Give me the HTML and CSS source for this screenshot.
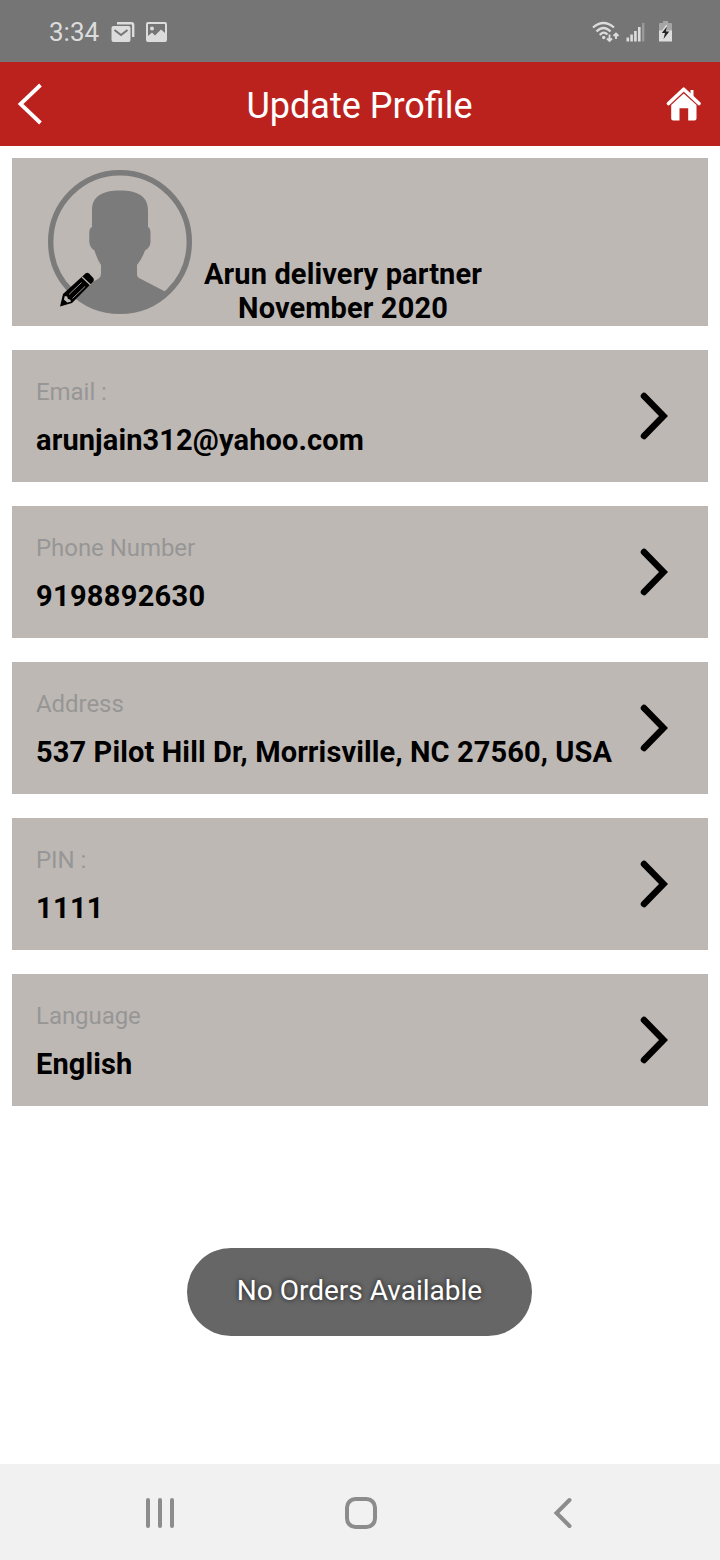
FILE: index.html
```html
<!DOCTYPE html>
<html lang="en">
<head>
<meta charset="UTF-8">
<meta name="viewport" content="width=device-width, initial-scale=1.0">
<title>Update Profile</title>
<link rel="stylesheet" href="styles.css">
</head>
<body>

<div class="status-bar">
  <span class="time">3:34</span>
  <svg class="icon-mail" width="24" height="22" viewBox="0 0 24 22">
    <path d="M6 2.200H20.500Q22.200 2.200 22.200 4V16" fill="none" stroke="#dcdcdc" stroke-width="2.400"/>
    <rect x="0.500" y="5" width="19" height="16" rx="2" fill="#dcdcdc"/>
    <path d="M3.500 9L10 14L16.500 9" fill="none" stroke="#757575" stroke-width="2"/>
  </svg>
  <svg class="icon-image" width="21" height="20" viewBox="0 0 21 20">
    <rect x="1" y="1" width="19" height="18" rx="1" fill="none" stroke="#dcdcdc" stroke-width="2"/>
    <circle cx="6" cy="6.500" r="2" fill="#dcdcdc"/>
    <path d="M2 14L6 10.500L9 13.500L15 7.500L19 11V19H2Z" fill="#dcdcdc"/>
  </svg>
  <div class="status-right">
    <svg class="icon-wifi" width="28" height="22" viewBox="0 0 28 22">
      <g fill="none" stroke="#dcdcdc" stroke-width="2.300">
        <path d="M1 6.500Q11.500 -2.500 22 6.500"/>
        <path d="M4.500 10.500Q11.500 3.500 18.500 10.500"/>
        <path d="M7.800 14Q11.500 9.500 15.500 13.500"/>
        <path d="M17.500 13.500V20M15 17.500L17.500 20L20 17.500M24 18V12.500M21.500 15L24 12.500L26.500 15" stroke-width="1.900"/>
      </g>
      <circle cx="11.700" cy="16.500" r="1.700" fill="#dcdcdc"/>
    </svg>
    <svg class="icon-signal" width="19" height="20" viewBox="0 0 19 20">
      <path d="M1.800 15.500V19.500M5.600 12.500V19.500M9.400 9V19.500M13.300 5V19.500" stroke="#dcdcdc" stroke-width="2.600"/>
      <path d="M17.200 1V19.500" stroke="#9a9a9a" stroke-width="2.400"/>
    </svg>
    <svg class="icon-battery" width="13" height="21" viewBox="0 0 13 21">
      <path d="M4 0H9V2H12Q13 2 13 3V10H0V3Q0 2 1 2H4Z" fill="#a6a6a6"/>
      <path d="M0 9.500H3L7 4H8V9.500H13V20.500H0Z" fill="#dcdcdc"/>
      <path d="M8 5.500L2.800 12H6L4.500 18L10.300 10.500H7Z" fill="#222"/>
    </svg>
  </div>
</div>

<header>
  <svg class="back" width="28" height="44" viewBox="0 0 28 44">
    <path d="M25.500 3L5.500 22L25.500 41" fill="none" stroke="#fff" stroke-width="3.800"/>
  </svg>
  <h1>Update Profile</h1>
  <svg class="home" width="36" height="36" viewBox="0 0 36 36">
    <path d="M2.500 17.500L17.700 3.200L33 17.500" fill="none" stroke="#fff" stroke-width="3.600" stroke-linejoin="round" stroke-linecap="round"/>
    <path d="M24.500 4H27.500V13L24.500 10Z" fill="#fff"/>
    <path d="M5.200 19L17.700 7.500L30.500 19V32.500Q30.500 34.500 28.500 34.500H22.200V22.200H13.500V34.500H7.200Q5.200 34.500 5.200 32.500Z" fill="#fff"/>
  </svg>
</header>

<div class="container">
  <div class="profile">
    <div class="avatar">
      <svg width="144" height="144" viewBox="0 0 144 144">
        <circle cx="72" cy="72" r="69.300" fill="none" stroke="#7b7b7b" stroke-width="5.400"/>
        <path d="M44 40C44 26 55 20.500 72 20.500C89 20.500 100 26 100 40V57Q102.500 58 102.500 63V72Q102 78 97 80.500Q94 89 89 95V104Q89 107 92 108.500L118 122A69 69 0 0 1 26 122L50 109Q53 107 53 104V95Q49 89 46.500 80.500Q42 78 41.300 72V63Q41.300 58 44 57Z" fill="#7b7b7b"/>
      </svg>
      <svg class="pencil" width="35" height="35" viewBox="0 0 35 35">
        <path d="M0 34.500L3 22L25.500 1.500Q27.300 0 29 1.500L33.300 6Q34.500 8 33.300 9.500L12 31Z" fill="#000"/>
        <path d="M22 5L30.500 13" fill="none" stroke="#beb8b4" stroke-width="1.200"/>
        <path d="M9 22.500L21.500 10.500M12.500 26.500L25 14.500" fill="none" stroke="#beb8b4" stroke-width="0.800"/>
        <path d="M4.800 24L7.200 24.500L8 27L10.500 27.800L10.800 29.800L7.200 30.600L3.900 27.600Z" fill="#beb8b4"/>
      </svg>
    </div>
    <div class="profile-name">Arun delivery partner<br>November 2020</div>
  </div>

  <div class="card">
    <div class="card-text">
      <div class="label">Email :</div>
      <div class="value">arunjain312@yahoo.com</div>
    </div>
    <svg class="chevron" width="28" height="48" viewBox="0 0 28 48"><path d="M4 4L23.500 24L4 44"/></svg>
  </div>

  <div class="card">
    <div class="card-text">
      <div class="label">Phone Number</div>
      <div class="value digits">9198892630</div>
    </div>
    <svg class="chevron" width="28" height="48" viewBox="0 0 28 48"><path d="M4 4L23.500 24L4 44"/></svg>
  </div>

  <div class="card">
    <div class="card-text">
      <div class="label">Address</div>
      <div class="value">537 Pilot Hill Dr, Morrisville, NC 27560, USA</div>
    </div>
    <svg class="chevron" width="28" height="48" viewBox="0 0 28 48"><path d="M4 4L23.500 24L4 44"/></svg>
  </div>

  <div class="card">
    <div class="card-text">
      <div class="label">PIN :</div>
      <div class="value digits">1111</div>
    </div>
    <svg class="chevron" width="28" height="48" viewBox="0 0 28 48"><path d="M4 4L23.500 24L4 44"/></svg>
  </div>

  <div class="card">
    <div class="card-text">
      <div class="label">Language</div>
      <div class="value">English</div>
    </div>
    <svg class="chevron" width="28" height="48" viewBox="0 0 28 48"><path d="M4 4L23.500 24L4 44"/></svg>
  </div>
</div>

<div class="toast">No Orders Available</div>

<nav class="nav-bar">
  <svg width="30" height="32" viewBox="0 0 30 32">
    <path d="M3 3V29M15 3V29M27 3V29"/>
  </svg>
  <svg class="nav-home" width="32" height="32" viewBox="0 0 32 32">
    <rect x="2" y="2" width="28" height="28" rx="8.500"/>
  </svg>
  <svg width="20" height="32" viewBox="0 0 20 32">
    <path d="M16.500 3L3.500 16L16.500 29"/>
  </svg>
</nav>

</body>
</html>
```
FILE: styles.css
```css
* {
  box-sizing: border-box;
}

body {
  margin: 0;
  height: 1560px;
  display: flex;
  flex-direction: column;
  font-family: Roboto, sans-serif;
  background: #fff;
  color: #000;
}

svg {
  display: block;
  flex-shrink: 0;
}

.status-bar {
  height: 62px;
  padding: 1px 48px 0 49px;
  display: flex;
  align-items: center;
  background: #757575;
}

.time {
  width: 62px;
  font-size: 26px;
  color: #dcdcdc;
}

.icon-image {
  margin-left: 11px;
}

.status-right {
  margin-left: auto;
  display: flex;
  align-items: center;
}

.icon-signal {
  margin-left: 6px;
}

.icon-battery {
  margin-left: 14px;
}

header {
  height: 84px;
  padding: 0 18px 0 15px;
  display: flex;
  align-items: center;
  justify-content: space-between;
  background: #bb221e;
  color: #fff;
}

header h1 {
  margin: 4px 0 0 10px;
  font-size: 36px;
  font-weight: 400;
}

.container {
  padding: 12px;
  display: flex;
  flex-direction: column;
  gap: 24px;
}

.profile {
  height: 168px;
  padding: 0 36px;
  display: flex;
  align-items: center;
  gap: 12px;
  background: #beb8b4;
}

.avatar {
  position: relative;
}

.pencil {
  position: absolute;
  left: 12px;
  top: 102px;
}

.profile-name {
  align-self: flex-end;
  margin-bottom: 1px;
  font-size: 29px;
  font-weight: 700;
  line-height: 34px;
  letter-spacing: 0.12px;
  text-align: center;
}

.card {
  height: 132px;
  padding: 3px 41px 0 24px;
  display: flex;
  align-items: center;
  justify-content: space-between;
  background: #beb8b4;
}

.label {
  margin-bottom: 17px;
  font-size: 24px;
  line-height: 28px;
  letter-spacing: -0.05px;
  color: #969696;
}

.value {
  font-size: 29px;
  font-weight: 700;
  line-height: 35px;
  letter-spacing: 0.12px;
  white-space: nowrap;
}

.digits {
  letter-spacing: 0.3px;
}

.chevron {
  margin: 0 -1px 3px 0;
}

.chevron path {
  fill: none;
  stroke: #000;
  stroke-width: 6.5;
  stroke-linecap: round;
}

.toast {
  align-self: center;
  width: 345px;
  height: 88px;
  margin: 130px 1px 0 0;
  border-radius: 44px;
  background: #666;
  color: #fff;
  font-size: 28px;
  line-height: 86px;
  text-align: center;
  text-shadow: 0 0 5px rgba(0, 0, 0, 0.75);
}

.nav-bar {
  height: 96px;
  margin-top: auto;
  padding: 2px 147px 0 145px;
  display: flex;
  align-items: center;
  justify-content: space-between;
  background: #f1f1f1;
}

.nav-bar svg {
  fill: none;
  stroke: #8c8c8c;
  stroke-width: 4;
  stroke-linecap: round;
}

.nav-home {
  margin-right: 7px;
}
```
